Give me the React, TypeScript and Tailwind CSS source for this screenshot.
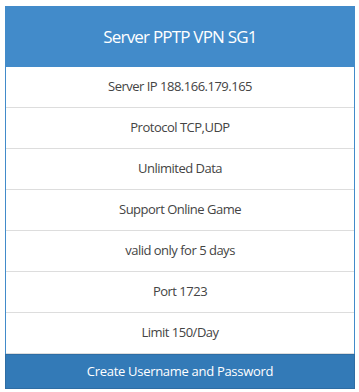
import React from "react";

const rows = [
  "Server IP 188.166.179.165",
  "Protocol TCP,UDP",
  "Unlimited Data",
  "Support Online Game",
  "valid only for 5 days",
  "Port 1723",
  "Limit 150/Day",
];

export default function App() {
  return (
    <div className="w-[359px] h-[392px] bg-white pl-[5px] pt-[6px]" style={{ fontFamily: '"Segoe UI", "Open Sans", sans-serif' }}>
      <div className="w-[350px] border border-[#428bca] bg-white">
        <div className="h-[60px] bg-[#428bca] flex items-center justify-center text-white text-[17px] tracking-[-0.8px]">
          Server PPTP VPN SG1
        </div>
        {rows.map((r) => (
          <div key={r} className="h-[41px] border-b border-[#dddddd] flex items-center justify-center text-[13px] tracking-[-0.5px] text-[#444]">
            {r}
          </div>
        ))}
        <div className="h-[35px] bg-[#337ab7] border border-[#2e6da4] -mx-px -mb-px flex items-center justify-center text-white text-[13px] tracking-[-0.3px]">
          Create Username and Password
        </div>
      </div>
    </div>
  );
}
